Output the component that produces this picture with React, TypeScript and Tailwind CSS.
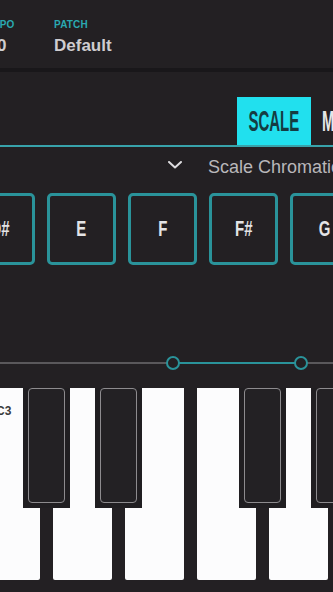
import React from "react";

const notes = ["D#", "E", "F", "F#", "G"];
const whiteKeys = ["C3", "", "", "", "", ""];
const blackKeyLefts = [23, 95, 239, 311];

export default function App() {
  return (
    <div
      className="w-[333px] h-[592px] overflow-hidden bg-[#232023] flex flex-col"
      style={{ fontFamily: '"Liberation Sans", Arial, sans-serif' }}
    >
      {/* Header */}
      <div className="h-[68px] shrink-0 flex pt-[20px] ml-[-22px]">
        <div className="w-[76px] shrink-0 flex flex-col">
          <div className="text-[10px] leading-none font-bold text-[#2aa9b1] tracking-[0.02em]">TEMPO</div>
          <div className="mt-[7px] text-[17px] leading-none font-bold text-[#cfcdd0]">120</div>
        </div>
        <div className="shrink-0 flex flex-col">
          <div className="text-[10px] leading-none font-bold text-[#2aa9b1] tracking-[0.02em]">PATCH</div>
          <div className="mt-[7px] text-[17px] leading-none font-bold text-[#cfcdd0]">Default</div>
        </div>
      </div>
      <div className="h-[4px] shrink-0 bg-[#19171a]" />

      {/* Tabs */}
      <div className="mt-[25px] flex items-end pl-[237px] border-b-2 border-[#38a3ab] shrink-0">
        <div className="w-[74px] h-[48px] shrink-0 bg-[#21e0ee] flex items-center justify-center overflow-hidden">
          <span className="inline-block text-[30px] leading-none font-bold text-[#153c42] scale-x-[0.5] whitespace-nowrap">
            SCALE
          </span>
        </div>
        <div className="h-[48px] w-[80px] shrink-0 flex items-center pl-[11px]">
          <span className="inline-block text-[30px] leading-none font-bold text-[#e6e6e6] scale-x-[0.5] origin-left whitespace-nowrap">
            MODE
          </span>
        </div>
      </div>

      {/* Dropdown row */}
      <div className="h-[40px] shrink-0 flex items-center pl-[168px]">
        <svg width="14" height="8" viewBox="0 0 14 8" className="mb-[5px] shrink-0">
          <polyline points="1,1 7,6.5 13,1" fill="none" stroke="#dedde0" strokeWidth="2" strokeLinecap="round" strokeLinejoin="round" />
        </svg>
        <span className="ml-[26px] whitespace-nowrap text-[18px] leading-none text-[#b9b7ba]">
          Scale Chromatic
        </span>
      </div>

      {/* Note buttons */}
      <div className="mt-[6px] ml-[-34px] flex gap-[12px] shrink-0">
        {notes.map((n) => (
          <div
            key={n}
            className="w-[69px] h-[72px] shrink-0 border-[3px] border-[#2a939a] rounded-[5px] flex items-center justify-center"
          >
            <span className="inline-block text-[22px] leading-none font-bold text-[#e4e4e6] scale-x-[0.68]">
              {n}
            </span>
          </div>
        ))}
      </div>

      {/* Range slider */}
      <div className="mt-[97px] h-[2px] bg-[#5a585b] relative shrink-0">
        <div className="absolute left-[173px] w-[128px] top-0 h-[2px] bg-[#2a939a]" />
        <div className="absolute left-[166px] top-[-6px] w-[14px] h-[14px] rounded-full border-2 border-[#2a939a] bg-[#232023]" />
        <div className="absolute left-[294px] top-[-6px] w-[14px] h-[14px] rounded-full border-2 border-[#2a939a] bg-[#232023]" />
      </div>

      {/* Piano */}
      <div className="mt-[24px] relative flex-1">
        <div className="flex gap-[13px] ml-[-19px]">
          {whiteKeys.map((label, i) => (
            <div key={i} className="w-[59px] h-[192px] shrink-0 bg-[#fcfcfd] rounded-b-[2px] pt-[10px] pl-[15px]">
              {label && (
                <span className="text-[12px] leading-none font-bold text-[#3a3a3c]">{label}</span>
              )}
            </div>
          ))}
        </div>
        {blackKeyLefts.map((l) => (
          <div
            key={l}
            className="absolute top-0 w-[47px] h-[120px] bg-[#201e21] px-[5px] pb-[5px]"
            style={{ left: l }}
          >
            <div className="w-full h-full rounded-[4px] border-[1.5px] border-[#8d8b8e] bg-[#232124]" />
          </div>
        ))}
      </div>
    </div>
  );
}
